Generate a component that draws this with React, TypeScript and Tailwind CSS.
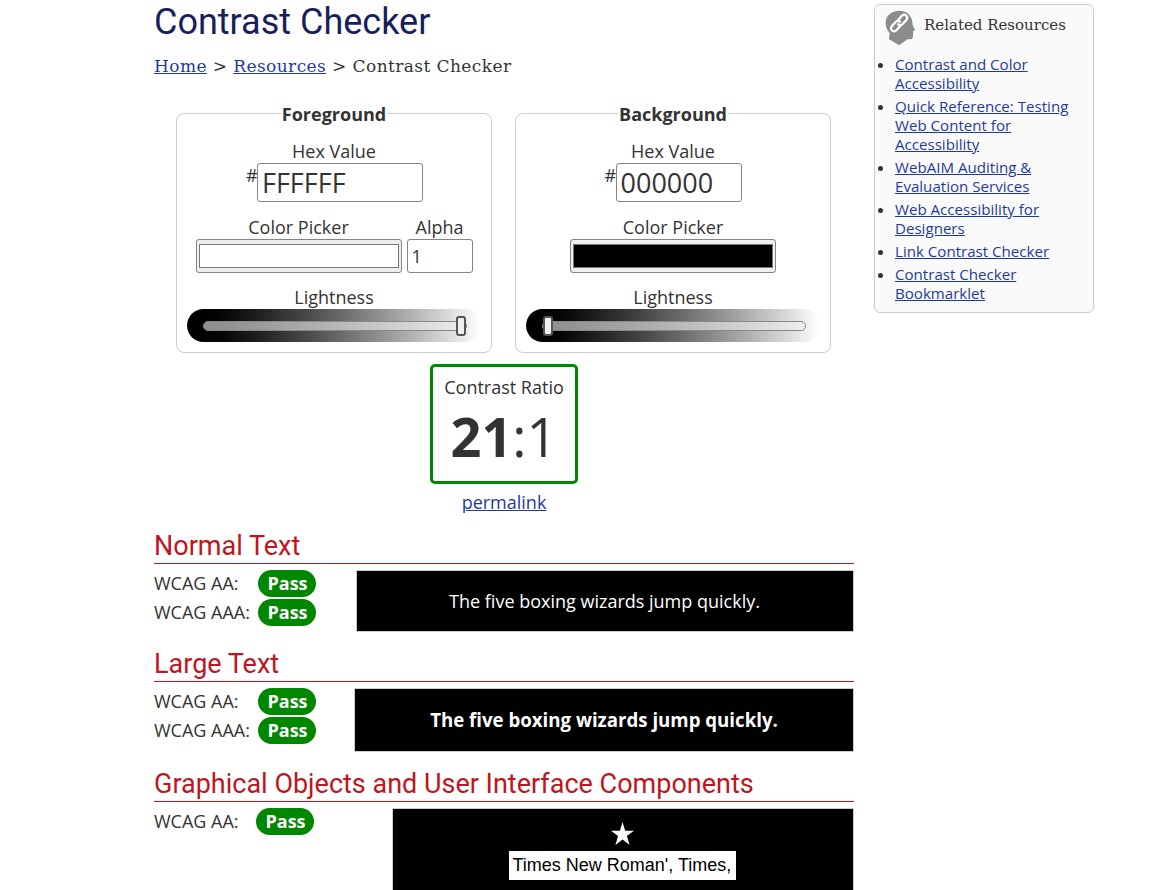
import React from "react";

const resources = [
  ["Contrast and Color", "Accessibility"],
  ["Quick Reference: Testing", "Web Content for", "Accessibility"],
  ["WebAIM Auditing &", "Evaluation Services"],
  ["Web Accessibility for", "Designers"],
  ["Link Contrast Checker"],
  ["Contrast Checker", "Bookmarklet"],
];

function HeadIcon() {
  return (
    <svg className="h-[36px] w-[31px]" viewBox="45 28 93 108" aria-hidden="true">
      <path
        fill="#8c8c8c"
        d="M88 30C64 30 47 45 47 67c0 13 5 22 12 31l-2 18 31 18 24-18h9c6 0 8-4 8-10l1-15 5-3-7-14C128 45 111 30 88 30z"
      />
      <g fill="none" stroke="#fff" strokeWidth="7" strokeLinecap="round" strokeLinejoin="round">
        <path d="M82 61l12-14c4-5 10-6 14-3 5 4 5 10 1 14l-11 12c-4 4-9 4-13 1" />
        <path d="M91 75l-11 13c-4 4-9 5-13 2-5-4-5-10-1-14l11-12c4-4 9-4 13-1" />
      </g>
    </svg>
  );
}

function Slider({ end }: { end: boolean }) {
  return (
    <div className="flex h-[33px] w-[294px] items-center rounded-[17px] bg-linear-to-r from-black to-white pr-[14px] pl-4">
      <div
        className={`flex h-[10px] w-full items-center rounded-full border border-[#888] bg-[#efefef]/60 ${
          end ? "justify-end" : "justify-start"
        }`}
      >
        <span className="h-5 w-[10px] shrink-0 rounded-[3px] border-2 border-[#555] bg-[#efefef]" />
      </div>
    </div>
  );
}

function Picker({ black }: { black?: boolean }) {
  return (
    <div className="h-[34px] w-[206px] rounded-[3px] border border-[#858585] bg-[#efefef] px-[2px] py-[4px]">
      <div className={`h-full w-full border border-[#777] ${black ? "bg-black" : "bg-white"}`} />
    </div>
  );
}

function Panel({ title, hex, foreground }: { title: string; hex: string; foreground?: boolean }) {
  return (
    <fieldset className="h-[251px] w-[316px] rounded-[8px] border border-[#ccc] leading-6">
      <legend className="mx-auto px-px pt-px leading-[22px] font-bold">{title}</legend>
      <div className="flex flex-col items-center pt-[14px]">
        <div>Hex Value</div>
        <div className={`flex ${foreground ? "ml-px" : ""}`}>
          <span className="w-[11px]">#</span>
          <div
            className={`flex h-[39px] items-center rounded-[3px] border border-[#858585] px-1 pt-px text-[27px] ${
              foreground ? "w-[166px]" : "w-[126px]"
            }`}
          >
            {hex}
          </div>
        </div>
        <div className="mt-[13px] flex gap-[5px] text-center">
          <div>
            <div>Color Picker</div>
            <Picker black={!foreground} />
          </div>
          {foreground && (
            <div>
              <div>Alpha</div>
              <div className="flex h-[34px] w-[66px] items-center rounded-[3px] border border-[#858585] px-1">1</div>
            </div>
          )}
        </div>
        <div className="mt-3">Lightness</div>
        <Slider end={!!foreground} />
      </div>
    </fieldset>
  );
}

function Heading({ children }: { children: React.ReactNode }) {
  return (
    <h2 className="h-[36px] border-b border-[#bd1622] font-[Roboto,sans-serif] text-[27px] leading-[37px] text-[#bd1622]">
      {children}
    </h2>
  );
}

function Result({ label, wide = true }: { label: string; wide?: boolean }) {
  return (
    <div className="flex h-[27px] items-center">
      <span className={wide ? "w-[104px]" : "w-[102px]"}>{label}</span>
      <span className="flex h-[27px] w-[58px] items-center justify-center rounded-full bg-[#008700] pl-px font-bold text-white">
        Pass
      </span>
    </div>
  );
}

export default function App() {
  return (
    <div className="flex h-[890px] w-full items-start gap-5 overflow-hidden bg-white pl-[154px] font-['Open_Sans',sans-serif] text-[18px] text-[#333]">
      <main className="w-[700px]">
        <h1 className="h-[44px] font-[Roboto,sans-serif] text-[36px] leading-[44px] text-[#191f5b]">
          Contrast Checker
        </h1>
        <nav className="mt-[10px] h-6 font-['DejaVu_Serif',serif] text-[17px] leading-6 tracking-[0.42px] whitespace-nowrap">
          <a className="text-[#1f3a9e] underline">Home</a> &gt; <a className="text-[#1f3a9e] underline">Resources</a> &gt;{" "}
          Contrast Checker
        </nav>
        <div className="mt-6 flex gap-[23px] pl-[22px]">
          <Panel title="Foreground" hex="FFFFFF" foreground />
          <Panel title="Background" hex="000000" />
        </div>
        <div className="mt-[11px] flex flex-col items-center">
          <div className="h-[120px] w-[148px] rounded-[5px] border-[3px] border-[#008700] pt-2 text-center">
            <div className="leading-6">Contrast Ratio</div>
            <div className="text-[54px] leading-[74px]">
              <b>21</b>:1
            </div>
          </div>
          <a className="mt-[6px] leading-6 text-[#1f3a9e] underline">permalink</a>
        </div>
        <section className="mt-[14px]">
          <Heading>Normal Text</Heading>
          <div className="mt-[6px] flex h-[62px] justify-between">
            <div className="flex flex-col gap-[2px]">
              <Result label="WCAG AA:" />
              <Result label="WCAG AAA:" />
            </div>
            <div className="flex w-[498px] items-center justify-center border border-[#ccc] bg-black pr-px text-white">
              The five boxing wizards jump quickly.
            </div>
          </div>
        </section>
        <section className="mt-[14px]">
          <Heading>Large Text</Heading>
          <div className="mt-[6px] flex h-[64px] justify-between">
            <div className="flex flex-col gap-[2px]">
              <Result label="WCAG AA:" />
              <Result label="WCAG AAA:" />
            </div>
            <div className="flex w-[500px] items-center justify-center border border-[#ccc] bg-black text-[18.66px] font-bold text-white">
              The five boxing wizards jump quickly.
            </div>
          </div>
        </section>
        <section className="mt-[14px]">
          <Heading>Graphical Objects and User Interface Components</Heading>
          <div className="mt-[6px] flex justify-between">
            <Result label="WCAG AA:" wide={false} />
            <div className="flex h-[100px] w-[462px] flex-col items-center border border-[#ccc] bg-black pt-[13px] pr-[2px]">
              <svg className="h-[23px] w-[23px]" viewBox="0 0 24 22" preserveAspectRatio="none" aria-hidden="true">
                <path fill="#fff" d="M12 0l2.8 8.300H24l-7.400 5.100L19.400 22 12 16.800 4.600 22l2.800-8.600L0 8.300h9.200z" />
              </svg>
              <div className="mt-[6px] h-[29px] w-[227px] bg-white px-1 font-['Liberation_Sans',sans-serif] leading-[29px] whitespace-nowrap text-black">
                Times New Roman', Times,
              </div>
            </div>
          </div>
        </section>
      </main>
      <aside className="mt-1 h-[309px] w-[220px] rounded-[6px] border border-[#ccc] bg-[#fafafa]">
        <div className="flex h-[50px] pt-[5px] pl-[10px]">
          <HeadIcon />
          <h2 className="ml-2 pt-[4px] font-['DejaVu_Serif',serif] text-[15px] leading-[22px] whitespace-nowrap">
            Related Resources
          </h2>
        </div>
        <ul className="flex list-disc flex-col gap-1 pl-5 text-[15.1px] leading-[19px]">
          {resources.map((lines) => (
            <li key={lines.join(" ")}>
              <a className="text-[#1f3a9e] underline">
                {lines.map((line, i) => (
                  <React.Fragment key={line}>
                    {i > 0 && <br />}
                    {line}
                  </React.Fragment>
                ))}
              </a>
            </li>
          ))}
        </ul>
      </aside>
    </div>
  );
}
